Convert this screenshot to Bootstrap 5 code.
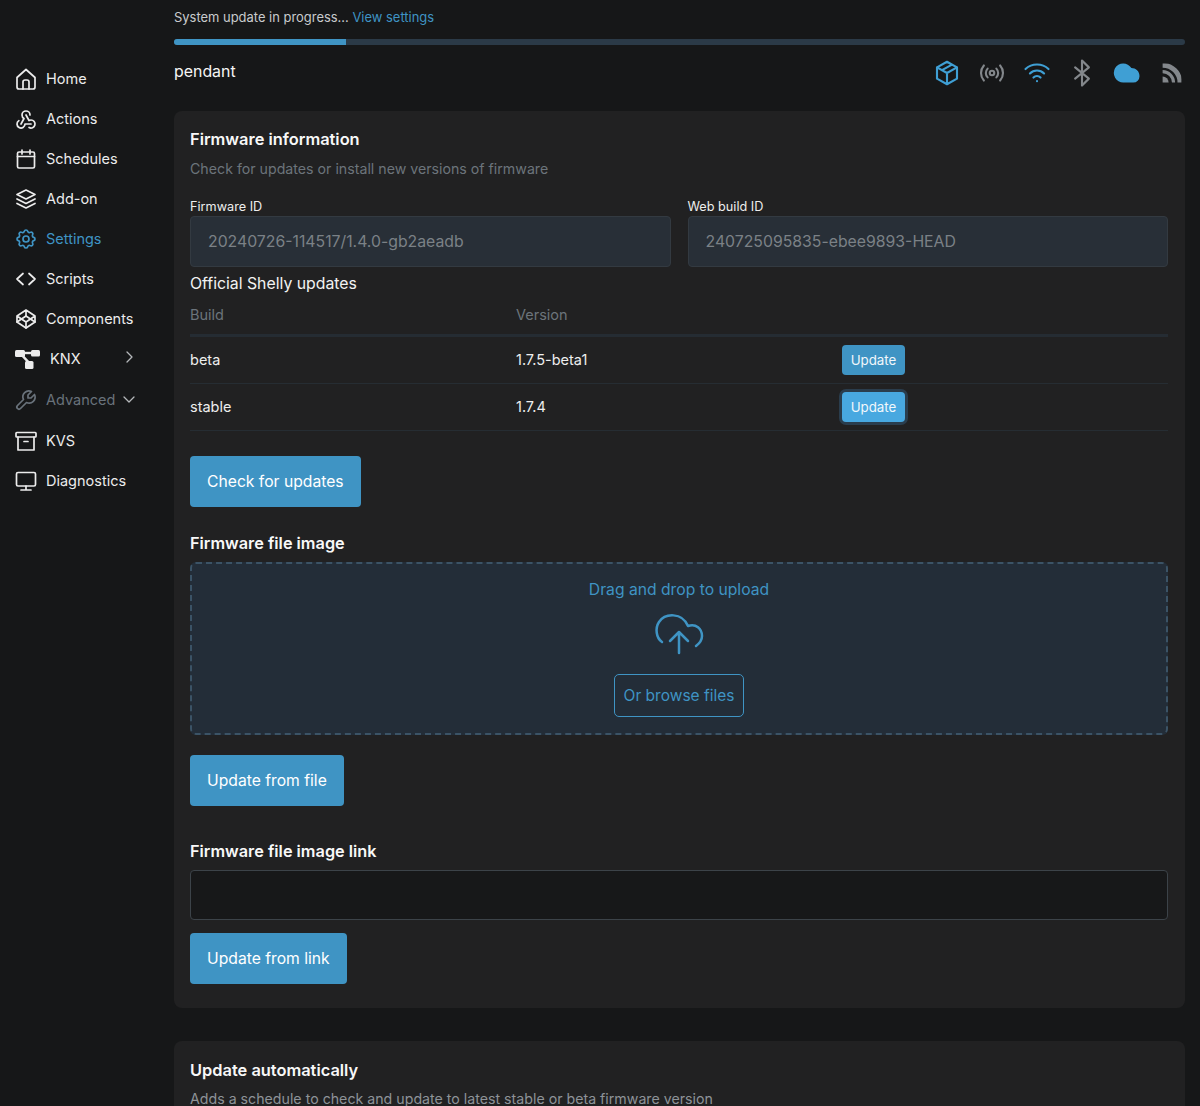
<!doctype html>
<html lang="en" data-bs-theme="dark"><head><meta charset="utf-8"><title>Firmware</title>
<link href="https://cdn.jsdelivr.net/npm/bootstrap@5.3.0/dist/css/bootstrap.min.css" rel="stylesheet">
<style>
html,body{height:1106px;overflow:hidden}
body{background:#161718;color:#f2f2f2;font-family:Inter,"Liberation Sans",sans-serif;font-size:15px;line-height:20px}
a{text-decoration:none}
.shell{display:flex;height:1106px}
.side{width:174px;flex:none;padding-top:59px}
.side-item{display:flex;align-items:center;height:40px;padding-left:14px;color:#ececec;font-size:14.5px}
.side-item svg.ic{width:24px;height:24px;margin-right:8px;flex:none}
.side-item.on{color:#3f94c4}
.side-item.dim{color:#69727b;height:42px}
.side-item.knx svg.ic{width:25px;margin-left:1px;margin-right:10px}
svg.st{fill:none;stroke:currentColor;stroke-width:1.7;stroke-linecap:round;stroke-linejoin:round}
svg.chev{width:12px;height:12px;margin-left:auto;margin-right:39px;margin-top:-5px;stroke-width:1.300;color:#b5b8bb}
svg.chev.dn{margin-top:-3px}
.main{width:1011px;flex:none}
.notice{font-size:12.95px;line-height:18px;padding-top:8px;color:#c9cbcd}
.notice a{color:#3f94c4}
.bar-track{height:6px;background:#2b3a47;border-radius:3px;margin-top:13px;overflow:hidden}
.bar-fill{height:6px;background:#3f94c4}
.head{display:flex;justify-content:space-between;height:66px;padding-top:16px}
.devname{font-size:15.9px;line-height:22px;color:#f5f5f5}
.stat{display:flex;margin-top:-3px;margin-right:-2px;height:30px}
.stat svg{width:30px;height:30px;margin-left:15px}
.c-blue{color:#3f9fd4}.c-grey{color:#83878b}
.panel{background:#212122;border-radius:8px;padding:16px 17px 24px 16px;margin-bottom:33px}
.ttl{font-size:16.4px;line-height:24px;font-weight:600;color:#f8f8f8;margin:0}
.sub{font-size:14.2px;line-height:20px;color:#6c747b;margin-top:8px}
.lbl{font-size:12.7px;line-height:16px;color:#ededed;display:block;margin-top:20px;margin-bottom:1px}
.ro{height:51px;background:#282f37;border:1px solid #333a41;border-radius:4px;padding:0 17px;font-size:15.8px;color:#7b8186;display:flex;align-items:center}
.gridish{display:grid;grid-template-columns:1fr 1fr;column-gap:17px}
.off{font-size:15.8px;line-height:24px;color:#f2f2f2;margin-top:5px}
.tb{width:100%;table-layout:fixed;font-size:14.5px;color:#eee}
.tb th{font-weight:400;color:#6c747b;height:39px;padding:1px 0 0;border-bottom:3px solid #252c33}
.tb td{padding:1px 0 0;height:47px;border-bottom:1px solid #262d33}
.tb tbody tr:first-child td{height:48px}
.go{background:#3f94c4;border:0;color:#fff;border-radius:4px;font-size:15.7px;height:51px;padding:1px 17px 0;display:block}
.go-sm{background:#3f94c4;border:0;color:#f1f7fb;border-radius:4px;font-size:13.3px;height:30px;width:63px;padding:0;display:block}
.go-sm.act{background:#48a8e0;box-shadow:0 0 0 3px #2a3d4d}
.sect{font-size:16.3px;line-height:24px;font-weight:600;color:#f8f8f8;margin:0}
.drop{height:173px;background:#232d38;border:2px dashed #3b5366;border-radius:6px;margin-top:7px;display:flex;flex-direction:column;align-items:center;color:#3f94c4;padding-top:14px}
.drop-t{font-size:15.7px;line-height:24px}
.drop svg{width:48px;height:42px;margin-top:11px;margin-bottom:19px;stroke-width:2.500;overflow:visible}
.browse{height:43px;width:130px;border:1px solid #3f94c4;border-radius:5px;color:#3f94c4;background:transparent;font-size:15.5px;padding:2px 0 0;flex:none}
.linkbox{height:50px;background:#171819;border:1px solid #3c4349;border-radius:4px;margin-top:7px;width:100%;display:block}
.check-btn{margin-top:25px}
.file-sect{margin-top:24px}
.file-btn{margin-top:20px}
.link-sect{margin-top:33px}
.link-btn{margin-top:13px}
.panel-next{margin-top:0;padding-top:17px}
.sub-bright{color:#8e9398;margin-top:7px}
</style></head><body>
<div class="shell">
<nav class="side">
<a class="side-item" href="#"><svg class="ic st" viewBox="0 0 24 24"><path d="M3 10.500 12 2.500l9 8V20a2 2 0 0 1-2 2H5a2 2 0 0 1-2-2z"/><path d="M9 22v-7a2 2 0 0 1 2-2h2a2 2 0 0 1 2 2v7"/></svg>Home</a>
<a class="side-item" href="#"><svg class="ic st" viewBox="0 0 24 24"><path d="M4.876 13.61a4 4 0 1 0 6.124 3.39h6"/><path d="M15.066 20.502a4 4 0 1 0 1.934-7.502c-.706 0-1.424.179-2 .5l-3-5.500"/><path d="M16 8a4 4 0 1 0-8 0c0 1.506.77 2.818 2 3.500l-3 5.500"/></svg>Actions</a>
<a class="side-item" href="#"><svg class="ic st" viewBox="0 0 24 24"><rect x="3.500" y="5" width="17" height="16" rx="1.500"/><path d="M16 3v4M8 3v4M3.500 9.500h17"/></svg>Schedules</a>
<a class="side-item" href="#"><svg class="ic st" viewBox="0 0 24 24"><path d="M12 3 3 7.500l9 4.500 9-4.500z"/><path d="m3 12 9 4.500 9-4.500M3 16.500 12 21l9-4.500"/></svg>Add-on</a>
<a class="side-item on" href="#"><svg class="ic st" viewBox="0 0 24 24"><path d="M10.325 4.317c.426-1.756 2.924-1.756 3.35 0a1.724 1.724 0 0 0 2.573 1.066c1.543-.94 3.31.826 2.37 2.37a1.724 1.724 0 0 0 1.065 2.572c1.756.426 1.756 2.924 0 3.35a1.724 1.724 0 0 0-1.066 2.573c.94 1.543-.826 3.31-2.37 2.37a1.724 1.724 0 0 0-2.572 1.065c-.426 1.756-2.924 1.756-3.35 0a1.724 1.724 0 0 0-2.573-1.066c-1.543.94-3.31-.826-2.37-2.37a1.724 1.724 0 0 0-1.065-2.572c-1.756-.426-1.756-2.924 0-3.35a1.724 1.724 0 0 0 1.066-2.573c-.94-1.543.826-3.31 2.37-2.37 1 .608 2.296.07 2.572-1.065z"/><circle cx="12" cy="12" r="3"/></svg>Settings</a>
<a class="side-item" href="#"><svg class="ic st" viewBox="0 0 24 24"><path d="M9 6.500 3 12l6 5.500M15 6.500l6 5.500-6 5.500"/></svg>Scripts</a>
<a class="side-item" href="#"><svg class="ic st" viewBox="0 0 24 24"><path d="m3 15 9 6 9-6-9-6z"/><path d="m3 9 9 6 9-6-9-6zM3 9v6M21 9v6M12 3v6M12 15v6"/></svg>Components</a>
<a class="side-item knx" href="#"><svg class="ic" viewBox="0 0 25 22" fill="currentColor"><rect x="0" y="2" width="10" height="7" rx="1.500"/><rect x="16" y="2" width="9" height="6.500" rx="1.500"/><rect x="10" y="13" width="8.500" height="8" rx="1.500"/><path d="M8 3.800h9v2.400H8z"/><path d="m6 8 2-1.500 7 7.500-2 1.500z"/></svg>KNX<svg class="chev st" viewBox="0 0 12 12"><path d="m4 1 5 5-5 5"/></svg></a>
<a class="side-item dim" href="#"><svg class="ic st" viewBox="0 0 24 24"><path transform="matrix(-1 0 0 1 24 0)" d="M7 10h3V7L6.500 3.500a6 6 0 0 1 8 8l6 6a2 2 0 0 1-3 3l-6-6a6 6 0 0 1-8-8z"/></svg>Advanced<svg class="chev dn st" viewBox="0 0 12 12"><path d="M1 4l5 5 5-5"/></svg></a>
<a class="side-item" href="#"><svg class="ic st" viewBox="0 0 24 24"><rect x="2" y="3.500" width="20" height="4.500" rx=".8"/><path d="M4 8v13h16V8M10 12.500h4"/></svg>KVS</a>
<a class="side-item" href="#"><svg class="ic st" viewBox="0 0 24 24"><rect x="2.500" y="3.500" width="19" height="13.500" rx="1.500"/><path d="M7 21h10M12 17v4"/></svg>Diagnostics</a>
</nav>
<main class="main">
<div class="notice">System update in progress... <a href="#">View settings</a></div>
<div class="bar-track"><div class="bar-fill" style="width:17%"></div></div>
<div class="head"><div class="devname">pendant</div>
<div class="stat">
<svg class="st c-blue" viewBox="0 0 24 24"><path d="m12 3 8 4.500v9L12 21l-8-4.500v-9zM12 12l8-4.500M12 12v9M12 12 4 7.500M16 5.250l-8 4.500"/></svg>
<svg class="st c-grey" viewBox="0 0 24 24"><circle cx="12" cy="12" r="1.800"/><path d="M15.500 8.500a5 5 0 0 1 0 7M18.500 6a9 9 0 0 1 0 12M8.500 15.500a5 5 0 0 1 0-7M5.500 18a9 9 0 0 1 0-12"/></svg>
<svg class="st c-blue" viewBox="0 0 24 24"><path d="M12 18.500h.01M9.172 15.672a4 4 0 0 1 5.656 0M6.343 12.343a8 8 0 0 1 11.314 0M2.800 8.800c5-4.800 13.400-4.800 18.400 0"/></svg>
<svg class="st c-grey" viewBox="0 0 24 24"><path d="m6.500 7.500 11 9-5.500 5.500V2l5.500 5.500-11 9"/></svg>
<svg class="c-blue" viewBox="0 0 24 24" fill="currentColor"><path d="M9 19.600A7.600 7.600 0 1 1 15.500 8C19 8 22 10.500 22 14.500A5 5 0 0 1 17 19.600z"/></svg>
<svg class="c-grey" viewBox="0 0 24 24" fill="currentColor"><defs><clipPath id="rsbox"><rect x="4.500" y="4.400" width="15" height="15.200"/></clipPath></defs><g clip-path="url(#rsbox)"><circle cx="4.500" cy="19.600" r="4.800"/><circle cx="4.500" cy="19.600" r="8.700" fill="none" stroke="currentColor" stroke-width="2.500"/><circle cx="4.500" cy="19.600" r="13.800" fill="none" stroke="currentColor" stroke-width="3.800"/></g></svg>
</div></div>
<section class="panel">
<h2 class="ttl">Firmware information</h2>
<div class="sub">Check for updates or install new versions of firmware</div>
<div class="gridish">
<div><label class="lbl">Firmware ID</label><div class="ro">20240726-114517/1.4.0-gb2aeadb</div></div>
<div><label class="lbl">Web build ID</label><div class="ro">240725095835-ebee9893-HEAD</div></div>
</div>
<div class="off">Official Shelly updates</div>
<table class="tb"><thead><tr><th>Build</th><th>Version</th><th></th></tr></thead>
<tbody><tr><td>beta</td><td>1.7.5-beta1</td><td><button class="go-sm">Update</button></td></tr>
<tr><td>stable</td><td>1.7.4</td><td><button class="go-sm act">Update</button></td></tr></tbody></table>
<button class="go check-btn">Check for updates</button>
<h3 class="sect file-sect">Firmware file image</h3>
<div class="drop"><div class="drop-t">Drag and drop to upload</div>
<svg class="st" viewBox="0 0 48 42"><path d="M7 29C1 25 0 15 4 9 10 0 27-1 33 13 41 10 47 16 47 23 47 27 45 30 41 33"/><path d="M24 40V20M15 28l9-9 9 9"/></svg>
<button class="browse">Or browse files</button></div>
<button class="go file-btn">Update from file</button>
<h3 class="sect link-sect">Firmware file image link</h3>
<input class="linkbox" aria-label="link">
<button class="go link-btn">Update from link</button>
</section>
<section class="panel panel-next">
<h2 class="ttl">Update automatically</h2>
<div class="sub sub-bright">Adds a schedule to check and update to latest stable or beta firmware version</div>
</section>
</main></div>
<script src="https://cdn.jsdelivr.net/npm/bootstrap@5.3.0/dist/js/bootstrap.bundle.min.js"></script>
</body></html>
